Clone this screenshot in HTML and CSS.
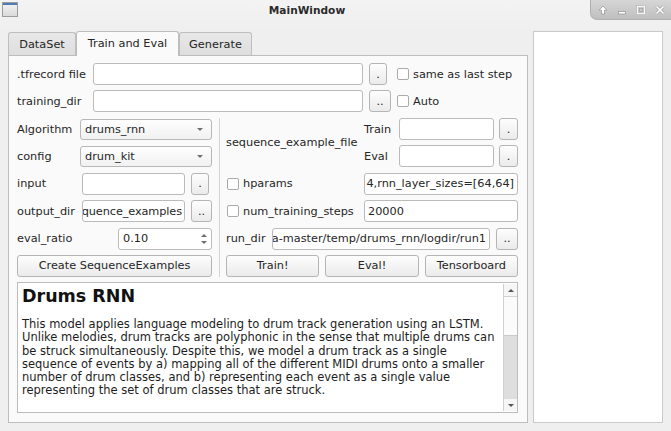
FILE: index.html
```html
<!DOCTYPE html>
<html>
<head>
<meta charset="utf-8">
<title>MainWindow</title>
<link rel="stylesheet" href="styles.css">
</head>
<body>
<div class="window">
  <header class="titlebar">
    <svg class="app-icon" width="16" height="15" viewBox="0 0 16 15">
      <defs>
        <linearGradient id="ig" x1="0" y1="0" x2="0" y2="1">
          <stop offset="0" stop-color="#f4f4f4"/>
          <stop offset="1" stop-color="#d9d9d9"/>
        </linearGradient>
      </defs>
      <rect x="0.5" y="0.5" width="15" height="14" fill="url(#ig)" stroke="#9c9c9c"/>
      <rect x="1" y="1" width="14" height="2" fill="#4f7bb3"/>
    </svg>
    <div class="title">MainWindow</div>
    <div class="wm-controls">
      <svg width="10" height="10" viewBox="0 0 10 10"><path d="M5 1 L9 5.2 L6.5 5.2 L6.5 9 L3.5 9 L3.5 5.2 L1 5.2 Z" fill="#fff" stroke="#9a9a9a" stroke-width="0.8"/></svg>
      <svg width="10" height="10" viewBox="0 0 10 10"><rect x="1.5" y="6.5" width="7" height="2.5" fill="#fff" stroke="#9a9a9a" stroke-width="0.8"/></svg>
      <svg width="10" height="10" viewBox="0 0 10 10"><rect x="1" y="1" width="8" height="8" fill="none" stroke="#fff" stroke-width="1.6"/><rect x="3.3" y="3.3" width="3.4" height="3.4" fill="none" stroke="#a3a3a3" stroke-width="0.8"/><rect x="0.4" y="0.4" width="9.2" height="9.2" fill="none" stroke="#a3a3a3" stroke-width="0.6"/></svg>
      <svg width="10" height="10" viewBox="0 0 10 10"><path d="M1.5 1.5 L8.5 8.5 M8.5 1.5 L1.5 8.5" stroke="#a3a3a3" stroke-width="3"/><path d="M1.5 1.5 L8.5 8.5 M8.5 1.5 L1.5 8.5" stroke="#fff" stroke-width="1.6"/></svg>
    </div>
  </header>

  <div class="main">
    <section class="tabwidget">
      <nav class="tabbar">
        <div class="tab tab-dataset">DataSet</div>
        <div class="tab tab-train active">Train and Eval</div>
        <div class="tab tab-generate">Generate</div>
      </nav>
      <div class="pane">
        <div class="top-grid">
          <span class="lbl">.tfrecord file</span>
          <div class="field"></div>
          <button class="btn btn-dot">.</button>
          <label class="check"><span class="cb"></span>same as last step</label>

          <span class="lbl">training_dir</span>
          <div class="field"></div>
          <button class="btn btn-dots">..</button>
          <label class="check"><span class="cb"></span>Auto</label>
        </div>

        <div class="split">
          <div class="col col-left">
            <div class="lrow">
              <span class="lbl w57">Algorithm</span>
              <div class="combo"><span>drums_rnn</span><i class="caret"></i></div>
            </div>
            <div class="lrow">
              <span class="lbl w57">config</span>
              <div class="combo"><span>drum_kit</span><i class="caret"></i></div>
            </div>
            <div class="lrow">
              <span class="lbl w59">input</span>
              <div class="field w103"></div>
              <button class="btn w18">.</button>
            </div>
            <div class="lrow">
              <span class="lbl w59">output_dir</span>
              <div class="field w103 end tight"><span>quence_examples</span></div>
              <button class="btn w21">..</button>
            </div>
            <div class="lrow">
              <span class="lbl grow">eval_ratio</span>
              <div class="spin"><span>0.10</span><span class="spin-arrows"><i class="up"></i><i class="down"></i></span></div>
            </div>
            <button class="btn wide">Create SequenceExamples</button>
          </div>

          <div class="vsep"></div>

          <div class="col col-right">
            <div class="seq">
              <span class="seq-label">sequence_example_file</span>
              <div class="seq-grid">
                <span class="lbl">Train</span>
                <div class="field"></div>
                <button class="btn">.</button>
                <span class="lbl">Eval</span>
                <div class="field"></div>
                <button class="btn">.</button>
              </div>
            </div>
            <div class="rrow">
              <label class="check grow"><span class="cb"></span>hparams</label>
              <div class="field w154 end"><span>4,rnn_layer_sizes=[64,64]</span></div>
            </div>
            <div class="rrow">
              <label class="check grow"><span class="cb"></span>num_training_steps</label>
              <div class="field w154"><span>20000</span></div>
            </div>
            <div class="rrow gap6">
              <span class="lbl">run_dir</span>
              <div class="field grow end"><span>a-master/temp/drums_rnn/logdir/run1</span></div>
              <button class="btn w22">..</button>
            </div>
            <div class="rrow gap6">
              <button class="btn grow">Train!</button>
              <button class="btn grow">Eval!</button>
              <button class="btn grow">Tensorboard</button>
            </div>
          </div>
        </div>

        <div class="textview">
          <div class="doc">
            <h2 class="doc-title">Drums RNN</h2>
            <p class="doc-body">This model applies language modeling to drum track generation using an LSTM.<br>Unlike melodies, drum tracks are polyphonic in the sense that multiple drums can<br>be struck simultaneously. Despite this, we model a drum track as a single<br>sequence of events by a) mapping all of the different MIDI drums onto a smaller<br>number of drum classes, and b) representing each event as a single value<br>representing the set of drum classes that are struck.</p>
          </div>
          <div class="scrollbar">
            <div class="sb-arrow"><i class="up"></i></div>
            <div class="sb-handle"></div>
            <div class="sb-track"></div>
            <div class="sb-arrow"><i class="down"></i></div>
          </div>
        </div>
      </div>
    </section>
    <aside class="side-panel"></aside>
  </div>
</div>
</body>
</html>
```

FILE: styles.css
```css
* { box-sizing: border-box; }
html, body { margin: 0; padding: 0; }
body {
  background: #efefef;
  font-family: "DejaVu Sans", sans-serif;
  font-size: 11.3px;
  color: #262626;
  width: 671px;
  height: 431px;
  overflow: hidden;
}
.window { width: 671px; height: 431px; display: flex; flex-direction: column; }

/* title bar */
.titlebar {
  height: 31px;
  flex: none;
  display: flex;
  align-items: flex-start;
  background: linear-gradient(#f3f3f3, #efefef);
}
.app-icon { flex: none; margin: 2px 0 0 2px; }
.title {
  flex: 1;
  text-align: center;
  font-weight: bold;
  font-size: 10.6px;
  line-height: 20px;
  color: #2b2b2b;
  padding-left: 6px;
}
.wm-controls {
  flex: none;
  width: 81px;
  height: 20px;
  display: flex;
  align-items: center;
  gap: 9px;
  padding: 0 0 0 7px;
  background: linear-gradient(#d6d6d6, #bfbfbf);
  border-left: 1px solid #b0b0b0;
  border-bottom: 1px solid #b0b0b0;
  border-bottom-left-radius: 7px;
}

/* main area */
.main {
  flex: 1;
  display: flex;
  gap: 5px;
  padding: 0 8px 8px 8px;
  min-height: 0;
}
.tabwidget { width: 520px; flex: none; display: flex; flex-direction: column; min-width: 0; }
.tabbar {
  height: 25px;
  display: flex;
  align-items: flex-end;
  margin-bottom: -1px;
  position: relative;
  z-index: 1;
}
.tab {
  height: 23px;
  margin-bottom: 1px;
  display: flex;
  align-items: center;
  justify-content: center;
  background: linear-gradient(#e8e8e8, #dedede);
  border: 1px solid #bdbdbd;
  border-bottom: none;
  border-radius: 3px 3px 0 0;
  padding-top: 1px;
}
.tab.active {
  height: 25px;
  margin-bottom: 0;
  background: #fafafa;
  padding-top: 0;
  padding-bottom: 2px;
}
.tab-dataset { width: 68px; }
.tab-train { width: 103px; }
.tab-generate { width: 73px; }

.pane {
  flex: 1;
  background: #fafafa;
  border: 1px solid #bdbdbd;
  padding: 7px 9px 9px 8px;
  display: flex;
  flex-direction: column;
  min-height: 0;
  min-width: 0;
}

.lbl { white-space: nowrap; }
.grow { flex: 1; min-width: 0; }

/* common widgets */
.field {
  height: 22px;
  min-width: 0;
  background: #fff;
  border: 1px solid #bbbbbb;
  border-radius: 3px;
  padding: 0 3px 0 3px;
  display: flex;
  align-items: center;
  overflow: hidden;
  white-space: nowrap;
}
.field > span { flex: none; }
.field.end { justify-content: flex-end; }
.field.tight { padding: 0 2px 0 1px; letter-spacing: -0.1px; }
.btn {
  height: 22px;
  margin: 0;
  padding: 0;
  font: inherit;
  color: #262626;
  background: linear-gradient(#fdfdfd, #ebebeb);
  border: 1px solid #b5b5b5;
  border-radius: 3px;
  display: flex;
  align-items: center;
  justify-content: center;
  white-space: nowrap;
  flex: none;
}
.btn.grow { flex: 1; }
.check { display: flex; align-items: center; gap: 4px; white-space: nowrap; }
.cb {
  width: 12px;
  height: 12px;
  flex: none;
  background: #fff;
  border: 1px solid #ababab;
  border-radius: 2px;
}

/* top grid */
.top-grid {
  display: grid;
  grid-template-columns: 70px 270px 22px minmax(0, 1fr);
  grid-auto-rows: 22px;
  column-gap: 6px;
  row-gap: 5px;
  align-items: center;
}
.btn-dot { width: 18px; }
.btn-dots { width: 22px; }

/* split area */
.split { display: flex; margin-top: 6px; height: 159px; flex: none; min-width: 0; }
.col {
  display: grid;
  grid-template-columns: minmax(0, 1fr);
  grid-template-rows: repeat(6, 22px);
  row-gap: 5.4px;
  min-width: 0;
}
.col-left { width: 195px; flex: none; }
.col-right { flex: 1; }
.vsep { width: 1px; flex: none; background: #d2d2d2; margin: 0 6px 0 7px; }

.lrow { display: flex; align-items: center; gap: 6px; min-width: 0; }
.w57 { width: 57px; flex: none; }
.w59 { width: 59px; flex: none; }
.w103 { width: 103px; flex: none; }
.w18 { width: 18px; }
.w21 { width: 21px; }
.w22 { width: 22px; }
.w154 { width: 154px; flex: none; }
.wide { width: 100%; }

.combo {
  width: 132px;
  height: 21px;
  background: linear-gradient(#fefefe, #f1f1f1);
  border: 1px solid #b8b8b8;
  border-radius: 3px;
  display: flex;
  align-items: center;
  justify-content: space-between;
  padding: 0 8px 0 4px;
}
.caret {
  width: 0; height: 0;
  border-left: 3px solid transparent;
  border-right: 3px solid transparent;
  border-top: 3px solid #707070;
}
.spin {
  width: 94px;
  height: 22px;
  flex: none;
  background: #fff;
  border: 1px solid #bbbbbb;
  border-radius: 3px;
  display: flex;
  align-items: center;
  justify-content: space-between;
  padding: 0 3px 0 4px;
}
.spin-arrows { display: flex; flex-direction: column; gap: 4px; align-items: center; width: 8px; }
.up, .down {
  display: block;
  width: 0; height: 0;
  border-left: 3px solid transparent;
  border-right: 3px solid transparent;
}
.up { border-bottom: 3px solid #6e6e6e; }
.down { border-top: 3px solid #6e6e6e; }

/* right column */
.seq { grid-row: span 2; display: flex; align-items: center; min-width: 0; }
.seq-label { flex: 1; white-space: nowrap; }
.seq-grid {
  flex: none;
  display: grid;
  grid-template-columns: 30px 95px 19px;
  grid-template-rows: 22px 22px;
  column-gap: 5px;
  row-gap: 5.4px;
  align-items: center;
}
.seq-grid .btn { width: 19px; }
.rrow { display: flex; align-items: center; min-width: 0; }
.rrow .check { padding-left: 1px; }
.gap6 { gap: 6px; }

/* text view */
.textview {
  flex: 1;
  margin-top: 5px;
  display: flex;
  background: #fff;
  border: 1px solid #bcbcbc;
  min-height: 0;
}
.doc { flex: 1; padding: 3px 4px; overflow: hidden; color: #1d1d1d; min-width: 0; }
.doc-title {
  margin: 0 0 12px 0;
  font-size: 17.5px;
  font-weight: bold;
  line-height: 20px;
  color: #111;
}
.doc-body { margin: 0; font-size: 11.5px; line-height: 13.3px; white-space: nowrap; }
.scrollbar {
  width: 14px;
  flex: none;
  margin: 1px 0 1px 0;
  display: flex;
  flex-direction: column;
  background: #dedede;
  border-left: 1px solid #d0d0d0;
}
.sb-arrow {
  height: 12px;
  background: #f6f6f6;
  display: flex;
  align-items: center;
  justify-content: center;
}
.sb-arrow .up { border-bottom-color: #555; }
.sb-arrow .down { border-top-color: #555; }
.sb-handle {
  height: 40px;
  background: #fbfbfb;
  border-top: 1px solid #d2d2d2;
  border-bottom: 1px solid #cacaca;
}
.sb-track { flex: 1; }

.side-panel {
  width: 130px;
  flex: none;
  background: #fff;
  border: 1px solid #c9c9c9;
}
```
